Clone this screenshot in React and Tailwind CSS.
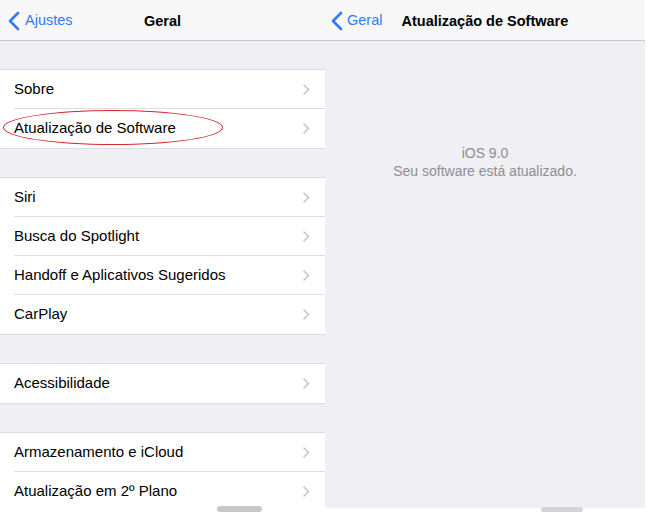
import React from 'react';

const Chevron = () => (
  <svg width="8" height="13" viewBox="0 0 8 13" className="shrink-0">
    <path d="M1.5 1.5 L6.5 6.5 L1.5 11.5" fill="none" stroke="#c7c7cc" strokeWidth="1.6" />
  </svg>
);

const BackChevron = () => (
  <svg width="12" height="20" viewBox="0 0 12 20" className="shrink-0">
    <path d="M10 2 L2 10 L10 18" fill="none" stroke="#2f7cf6" strokeWidth="2.6" strokeLinecap="round" strokeLinejoin="round" />
  </svg>
);

const Row = ({ label, last, circled }) => (
  <div className="relative h-[39px] flex items-center bg-white pl-[14px]">
    <div className={`flex-1 h-full flex items-center pr-[15px] ${last ? '' : 'border-b border-[#dedee2]'}`}>
      <span className="flex-1 text-[15px] text-black">{label}</span>
      <Chevron />
    </div>
    {circled && (
      <div className="absolute left-[3px] top-[1px] w-[220px] h-[35px] rounded-[50%] border-[1.5px] border-[#d9262e]" />
    )}
  </div>
);

const Group = ({ items }) => (
  <div className="border-y border-[#dcdce0]">
    {items.map((it, i) => (
      <Row key={it.label} label={it.label} circled={it.circled} last={i === items.length - 1} />
    ))}
  </div>
);

const groups = [
  [{ label: 'Sobre' }, { label: 'Atualização de Software', circled: true }],
  [{ label: 'Siri' }, { label: 'Busca do Spotlight' }, { label: 'Handoff e Aplicativos Sugeridos' }, { label: 'CarPlay' }],
  [{ label: 'Acessibilidade' }],
  [{ label: 'Armazenamento e iCloud' }, { label: 'Atualização em 2º Plano' }],
];

export default function App() {
  return (
    <div className="relative w-[650px] h-[512px] bg-white flex overflow-hidden" style={{ fontFamily: '"Liberation Sans", Arial, sans-serif' }}>
      {/* Ajustes > Geral */}
      <div className="w-[325px] h-[508px] bg-[#efeff4] flex flex-col overflow-hidden">
        <div className="h-[41px] shrink-0 bg-[#f7f7f8] border-b border-[#c8c7cc] relative flex items-center justify-center pt-[3px]">
          <div className="absolute left-[8px] top-0 h-full flex items-center gap-[5px] pt-[2px] text-[#2f7cf6] text-[14.5px]">
            <BackChevron />
            <span>Ajustes</span>
          </div>
          <span className="text-[14.5px] font-bold text-black">Geral</span>
        </div>
        <div className="flex flex-col gap-[28px] pt-[28px]">
          {groups.map((g, i) => (
            <Group key={i} items={g} />
          ))}
        </div>
      </div>

      {/* Geral > Atualização de Software */}
      <div className="w-[320px] h-[508px] bg-[#efeff4] flex flex-col">
        <div className="h-[41px] shrink-0 bg-[#f7f7f8] border-b border-[#c8c7cc] flex items-center pl-[6px] pt-[2px]">
          <div className="flex items-center gap-[4px] text-[#2f7cf6] text-[14.5px]">
            <BackChevron />
            <span>Geral</span>
          </div>
          <span className="ml-[19px] pt-[1px] text-[14.5px] font-bold text-black">Atualização de Software</span>
        </div>
        <div className="flex flex-col items-center pt-[103px] text-[14px] leading-[18px] text-[#8e8e93]">
          <span>iOS 9.0</span>
          <span>Seu software está atualizado.</span>
        </div>
      </div>

      {/* scroll indicators peeking at the bottom */}
      <div className="absolute left-[217px] top-[506px] w-[45px] h-[6px] rounded-full bg-[#c8c8cc]" />
      <div className="absolute left-[541px] top-[507px] w-[42px] h-[5px] rounded-full bg-[#d4d4d8]" />
    </div>
  );
}
